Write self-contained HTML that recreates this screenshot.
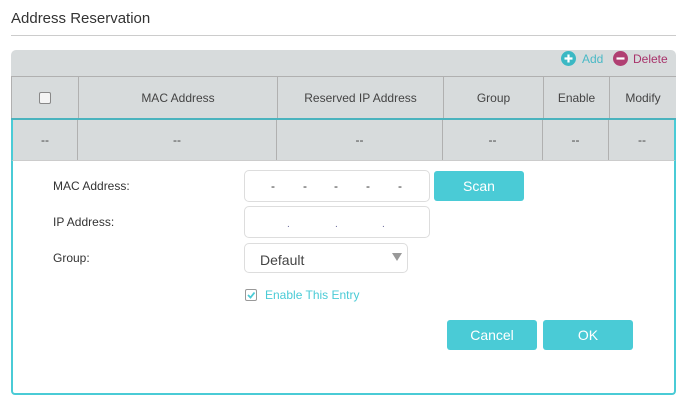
<!DOCTYPE html><html><head><style>
body{margin:0;width:686px;height:404px;background:#fff;font-family:"Liberation Sans",sans-serif;position:relative;overflow:hidden}
.a{position:absolute}
.t{color:#333;font-size:12px}
.c{position:absolute;top:0;height:100%;display:flex;align-items:center;justify-content:center;font-size:12px;color:#444;border-right:1px solid #b0b0b0;box-sizing:border-box}
.in{position:absolute;border:1px solid #ddd;border-radius:5px;background:#fff;box-sizing:border-box}
.btn{position:absolute;background:#4acbd6;color:#fff;font-size:14px;border-radius:3px;display:flex;align-items:center;justify-content:center}
.d{position:absolute;top:0}
</style></head><body>
<div class="a" style="left:11px;top:10px;font-size:15px;color:#333">Address Reservation</div>
<div class="a" style="left:11px;top:35px;width:665px;height:1px;background:#ccc"></div>
<div class="a" style="left:11px;top:50px;width:665px;height:110px;background:#d7dbdc;border-radius:5px 5px 0 0"></div>
<svg class="a" style="left:561px;top:51px" width="15" height="15"><circle cx="7.5" cy="7.5" r="7.5" fill="#3bb8c4"/><path d="M7.5 3.5v8M3.5 7.5h8" stroke="#fff" stroke-width="2.2"/></svg>
<div class="a" style="left:582px;top:52px;font-size:12px;color:#4ab9c6">Add</div>
<svg class="a" style="left:613px;top:51px" width="15" height="15"><circle cx="7.5" cy="7.5" r="7.5" fill="#b03f72"/><path d="M3.5 7.5h8" stroke="#fff" stroke-width="2.2"/></svg>
<div class="a" style="left:633px;top:52px;font-size:12px;color:#a8326a">Delete</div>
<div class="a" style="left:11px;top:76px;width:665px;height:42px;border-top:1px solid #b0b0b0;border-left:1px solid #b0b0b0;box-sizing:border-box">
<div class="c" style="left:0;width:67px"><div style="width:10px;height:10px;border:1px solid #888;border-radius:2px;background:#f4f4f4"></div></div>
<div class="c" style="left:67px;width:199px">MAC Address</div>
<div class="c" style="left:266px;width:166px">Reserved IP Address</div>
<div class="c" style="left:432px;width:100px">Group</div>
<div class="c" style="left:532px;width:66px">Enable</div>
<div class="c" style="left:598px;width:66px;border-right:none">Modify</div>
</div>
<div class="a" style="left:11px;top:118px;width:665px;height:2px;background:#4ab3be"></div>
<div class="a" style="left:11px;top:120px;width:665px;height:40px;border-left:2px solid #4acbd6;border-right:2px solid #4acbd6;box-sizing:border-box">
<div class="c" style="left:0;width:65px">--</div>
<div class="c" style="left:65px;width:199px">--</div>
<div class="c" style="left:264px;width:166px">--</div>
<div class="c" style="left:430px;width:100px">--</div>
<div class="c" style="left:530px;width:66px">--</div>
<div class="c" style="left:596px;width:66px;border-right:none">--</div>
</div>
<div class="a" style="left:11px;top:160px;width:665px;height:235px;border:2px solid #4acbd6;border-top:1px solid #ccc;border-radius:0 0 4px 4px;box-sizing:border-box"></div>
<div class="a t" style="left:53px;top:179px">MAC Address:</div>
<div class="a t" style="left:53px;top:215px">IP Address:</div>
<div class="a t" style="left:53px;top:251px">Group:</div>
<div class="in" style="left:244px;top:170px;width:186px;height:32px;font-size:12px;color:#333">
<span class="d" style="left:26px;top:8px">-</span><span class="d" style="left:58px;top:8px">-</span><span class="d" style="left:89px;top:8px">-</span><span class="d" style="left:121px;top:8px">-</span><span class="d" style="left:153px;top:8px">-</span></div>
<div class="in" style="left:244px;top:206px;width:186px;height:32px;font-size:10px;color:#669">
<span class="d" style="left:42px;top:12px">.</span><span class="d" style="left:90px;top:12px">.</span><span class="d" style="left:137px;top:12px">.</span></div>
<div class="in" style="left:244px;top:243px;width:164px;height:30px"><span class="a" style="left:15px;top:8px;font-size:14px;color:#444">Default</span><span class="a" style="right:5px;top:9px;width:0;height:0;border-left:5px solid transparent;border-right:5px solid transparent;border-top:8px solid #999"></span></div>
<div class="btn" style="left:434px;top:171px;width:90px;height:30px">Scan</div>
<div class="a" style="left:245px;top:289px;width:10px;height:10px;border:1px solid #999;border-radius:2px"><svg width="10" height="10" style="position:absolute;left:0;top:0"><path d="M2 5l2.5 2.5L8.5 2.5" stroke="#4acbd6" stroke-width="1.8" fill="none"/></svg></div>
<div class="a" style="left:265px;top:288px;font-size:12px;color:#4acbd6">Enable This Entry</div>
<div class="btn" style="left:447px;top:320px;width:90px;height:30px">Cancel</div>
<div class="btn" style="left:543px;top:320px;width:90px;height:30px">OK</div>
</body></html>
